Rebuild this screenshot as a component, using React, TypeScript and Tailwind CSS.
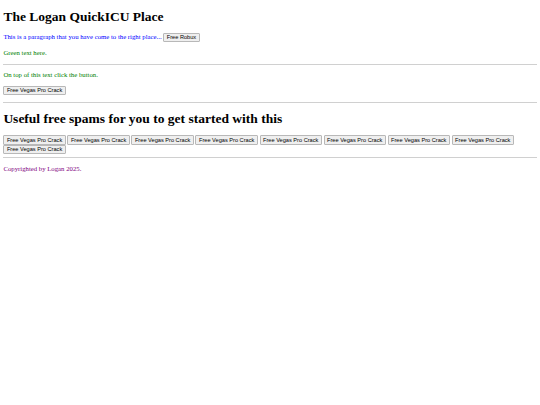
const btn =
  "inline-block align-baseline rounded-[1px] border border-[#b8b8b8] bg-[#efefef] px-[2.5px] py-[0.4px] font-['Liberation_Sans',Arial,sans-serif] text-[5.63px] leading-[1.15] text-black";

const Btn = ({ label }: { label: string }) => <button className={btn}>{label}</button>;

export default function App() {
  const spams = Array.from({ length: 9 });
  return (
    <div className="m-[3.375px] bg-white font-['Liberation_Serif','Times_New_Roman',serif] text-[6.75px] leading-[1.15] text-black">
      <h1 className="mt-[8.5px] mb-[9.05px] text-[13.5px] font-bold leading-[1.15]">The Logan QuickICU Place</h1>
      <p className="my-[6.75px] text-[#0000ff]">
        This is a paragraph that you have come to the right place... <Btn label="Free Robux" />
      </p>
      <p className="my-[6.75px] text-[#008000]">Green text here.</p>
      <hr className="my-[3.375px] border-t border-[#d0d0d0]" />
      <p className="my-[6.5px] text-[#008000]">On top of this text click the button.</p>
      <p className="my-[6.75px]">
        <Btn label="Free Vegas Pro Crack" />
      </p>
      <hr className="my-[3.375px] border-t border-[#d0d0d0]" />
      <h1 className="my-[8.6px] text-[13.5px] font-bold leading-[1.15]">
        Useful free spams for you to get started with this
      </h1>
      <div>
        {spams.map((_, i) => (
          <span key={i}>
            <Btn label="Free Vegas Pro Crack" />{" "}
          </span>
        ))}
      </div>
      <hr className="my-[3.375px] border-t border-[#d0d0d0]" />
      <p className="my-[6.75px] text-[#800080]">Copyrighted by Logan 2025.</p>
    </div>
  );
}
